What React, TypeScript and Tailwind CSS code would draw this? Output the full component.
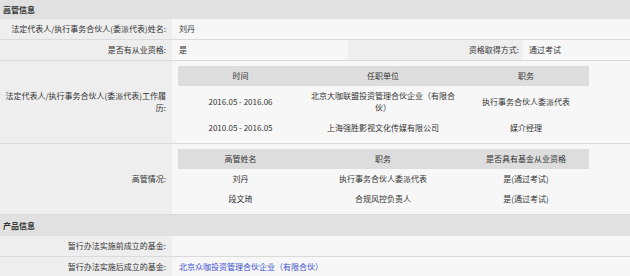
import React from "react";

const Row = ({ label, children, labelClass = "" }: { label: React.ReactNode; children?: React.ReactNode; labelClass?: string }) => (
  <div className="flex border-b border-[#dadada]">
    <div className={`w-[172px] shrink-0 bg-[#eeeeee] flex items-center justify-end text-right pr-[6px] ${labelClass}`}>{label}</div>
    <div className="flex-1 flex items-center pl-[7px] min-h-[20px]">{children}</div>
  </div>
);

const SubTable = ({ head, rows }: { head: string[]; rows: string[][] }) => (
  <div className="w-[411px] py-[5px] ml-[-1px]">
    <div className="grid grid-cols-[125px_160px_1fr] bg-[#dddddd] h-[20px] items-center text-center">
      {head.map((h) => (
        <div key={h}>{h}</div>
      ))}
    </div>
    {rows.map((r, i) => (
      <div key={i} className="grid grid-cols-[125px_160px_1fr] items-center text-center">
        {r.map((c, j) => (
          <div key={j} className="py-[4px] px-[6px] leading-[12px]">{c}</div>
        ))}
      </div>
    ))}
  </div>
);

export default function App() {
  return (
    <div className="w-[630px] h-[276px] overflow-hidden bg-[#f7f7f7] text-[8px] leading-[12px] text-[#333333] font-['Noto_Sans_CJK_SC',sans-serif]">
      <div className="h-[19px] bg-[#e1e1e1] font-bold pl-[3px] flex items-center">高管信息</div>
      <Row label="法定代表人/执行事务合伙人(委派代表)姓名:">刘丹</Row>
      <div className="flex border-b border-[#dadada] h-[21px]">
        <div className="w-[172px] shrink-0 bg-[#eeeeee] flex items-center justify-end pr-[6px]">是否有从业资格:</div>
        <div className="w-[176px] shrink-0 flex items-center pl-[7px]">是</div>
        <div className="w-[175px] shrink-0 bg-[#eeeeee] flex items-center justify-end pr-[4px]">资格取得方式:</div>
        <div className="flex-1 flex items-center pl-[6px]">通过考试</div>
      </div>
      <Row label="法定代表人/执行事务合伙人(委派代表)工作履历:" labelClass="pl-[2px]">
        <SubTable
          head={["时间", "任职单位", "职务"]}
          rows={[
            ["2016.05 - 2016.06", "北京大咖联盟投资管理合伙企业（有限合伙）", "执行事务合伙人委派代表"],
            ["2010.05 - 2016.05", "上海强胜影视文化传媒有限公司", "媒介经理"],
          ]}
        />
      </Row>
      <Row label="高管情况:">
        <SubTable
          head={["高管姓名", "职务", "是否具有基金从业资格"]}
          rows={[
            ["刘丹", "执行事务合伙人委派代表", "是(通过考试)"],
            ["段文琦", "合规风控负责人", "是(通过考试)"],
          ]}
        />
      </Row>
      <div className="h-[21px] bg-[#e1e1e1] font-bold pl-[3px] flex items-center">产品信息</div>
      <Row label="暂行办法实施前成立的基金:"></Row>
      <Row label="暂行办法实施后成立的基金:">
        <span className="text-[#3a4fd0]">北京众咖投资管理合伙企业（有限合伙）</span>
      </Row>
    </div>
  );
}
